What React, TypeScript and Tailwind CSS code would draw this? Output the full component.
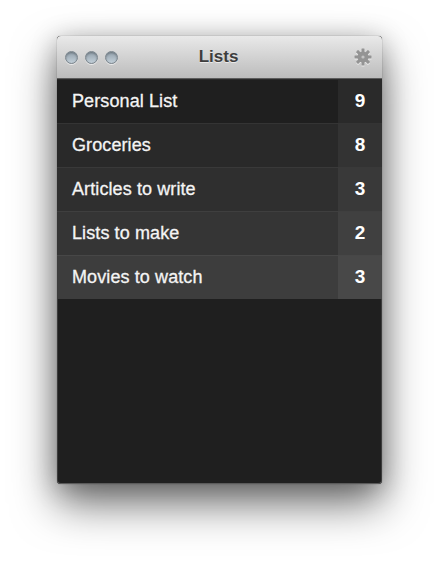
const lists = [
  { name: "Personal List", count: 9, row: "bg-[#1f1f1f]", cell: "bg-[#2a2a2a]" },
  { name: "Groceries", count: 8, row: "bg-[#292929]", cell: "bg-[#333333]" },
  { name: "Articles to write", count: 3, row: "bg-[#2f2f2f]", cell: "bg-[#393939]" },
  { name: "Lists to make", count: 2, row: "bg-[#353535]", cell: "bg-[#404040]" },
  { name: "Movies to watch", count: 3, row: "bg-[#3d3d3d]", cell: "bg-[#484848]" },
];

function TrafficLight() {
  return (
    <span className="h-[13px] w-[13px] rounded-full border border-[#7a858d] bg-gradient-to-b from-[#93a1ac] to-[#c3d0d9] shadow-[inset_0_1px_2px_rgba(0,0,0,0.3),0_1px_0_rgba(255,255,255,0.6)]" />
  );
}

function Gear() {
  return (
    <svg width="18" height="18" viewBox="0 0 18 18" fill="#949494" className="drop-shadow-[0_1px_0_rgba(255,255,255,0.6)]">
      <rect x="7.5" y="0.5" width="3" height="17" rx="0.5" />
      <rect x="0.5" y="7.5" width="17" height="3" rx="0.5" />
      <rect x="7.5" y="0.5" width="3" height="17" rx="0.5" transform="rotate(45 9 9)" />
      <rect x="0.5" y="7.5" width="17" height="3" rx="0.5" transform="rotate(45 9 9)" />
      <circle cx="9" cy="9" r="5.5" />
      <circle cx="9" cy="9" r="1.6" fill="#c4c4c4" />
    </svg>
  );
}

export default function App() {
  return (
    <div className="h-[563px] w-[439px] overflow-hidden bg-white pl-[57px] pt-[36px] font-['Liberation_Sans',Arial,sans-serif]">
      <div className="flex h-[448px] w-[325px] flex-col overflow-hidden rounded-[4px] bg-[#1f1f1f] shadow-[inset_0_-1px_0_#5a5a5a,inset_1px_0_0_#3c3c3c,inset_-1px_0_0_#3c3c3c,0_20px_44px_rgba(0,0,0,0.55),0_4px_26px_rgba(0,0,0,0.25),0_0_1px_rgba(0,0,0,0.6)]">
        <div className="grid h-[43px] shrink-0 grid-cols-[1fr_auto_1fr] items-center border-b border-[#5c5c5c] bg-gradient-to-b from-[#e9e9e9] to-[#bcbcbc] pl-[8px] pr-[10px]">
          <div className="flex gap-[7px]">
            <TrafficLight />
            <TrafficLight />
            <TrafficLight />
          </div>
          <span className="text-[17px] font-bold text-[#3d3d3d] [text-shadow:0_1px_0_rgba(255,255,255,0.6)]">Lists</span>
          <div className="flex justify-end">
            <Gear />
          </div>
        </div>
        {lists.map((item) => (
          <div key={item.name} className={`flex h-[44px] shrink-0 border-t border-white/5 first:border-t-0 ${item.row}`}>
            <span className="flex flex-1 items-center pl-[15px] text-[18px] tracking-[0.1px] text-[#f4f4f4] [-webkit-text-stroke:0.3px_#f4f4f4]">
              {item.name}
            </span>
            <span className={`flex w-[44px] items-center justify-center text-[19px] font-bold text-white ${item.cell}`}>
              {item.count}
            </span>
          </div>
        ))}
      </div>
    </div>
  );
}
